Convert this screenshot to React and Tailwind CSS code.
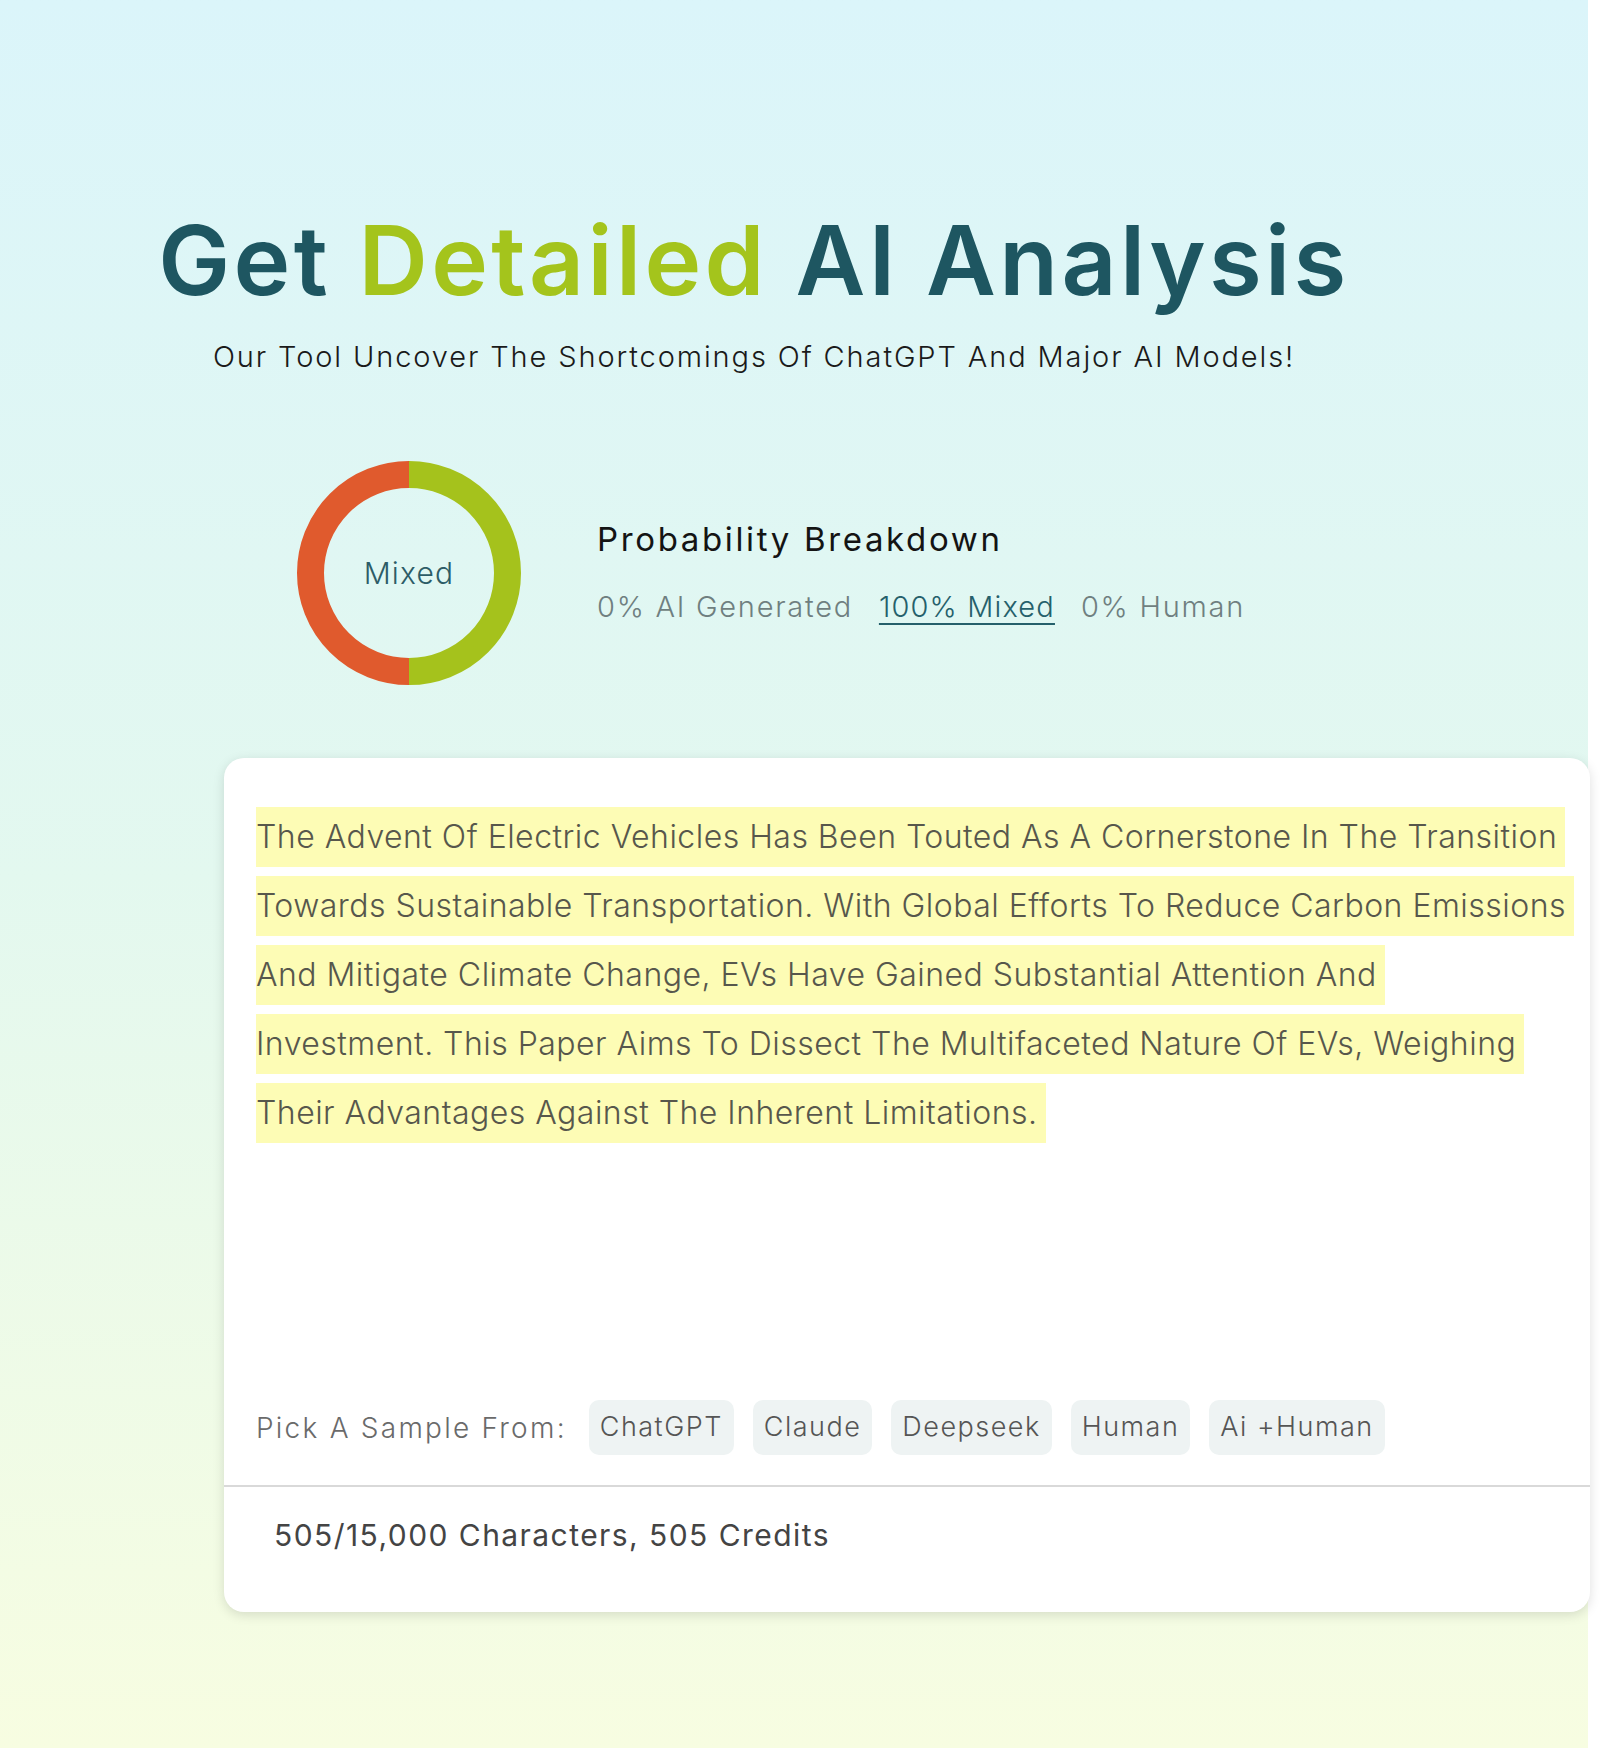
import React from "react";

const LINES = [
  "The Advent Of Electric Vehicles Has Been Touted As A Cornerstone In The Transition",
  "Towards Sustainable Transportation. With Global Efforts To Reduce Carbon Emissions",
  "And Mitigate Climate Change, EVs Have Gained Substantial Attention And",
  "Investment. This Paper Aims To Dissect The Multifaceted Nature Of EVs, Weighing",
  "Their Advantages Against The Inherent Limitations.",
];

const SAMPLES = ["ChatGPT", "Claude", "Deepseek", "Human", "Ai +Human"];

function Donut() {
  const size = 224;
  const sw = 27;
  const r = (size - sw) / 2;
  const c = size / 2;
  return (
    <svg width={size} height={size} viewBox={`0 0 ${size} ${size}`} className="shrink-0">
      <path
        d={`M ${c} ${c - r} A ${r} ${r} 0 0 0 ${c} ${c + r}`}
        fill="none"
        stroke="#e05a2d"
        strokeWidth={sw}
      />
      <path
        d={`M ${c} ${c - r} A ${r} ${r} 0 0 1 ${c} ${c + r}`}
        fill="none"
        stroke="#a5c21c"
        strokeWidth={sw}
      />
    </svg>
  );
}

export default function App() {
  return (
    <div className="flex w-full bg-white" style={{ fontFamily: "Inter, 'Noto Sans', sans-serif" }}>
      <div className="w-[1588px] h-[1748px] shrink-0 bg-gradient-to-b from-[#dbf5fa] via-[#e3f8ef] to-[#f7fde1]">
        {/* heading */}
        <div className="w-[1508px] pt-[200px] text-center">
          <h1 className="text-[96px] leading-[120px] font-semibold tracking-[0.035em] text-[#1e5661]">
            Get <span className="text-[#a4c41c]">Detailed</span> AI Analysis
          </h1>
          <p className="mt-[17px] text-[29px] leading-[40px] font-light tracking-[0.065em] text-[#1a1a1a]">
            Our Tool Uncover The Shortcomings Of ChatGPT And Major AI Models!
          </p>
        </div>

        {/* probability summary */}
        <div className="flex items-center mt-[84px] pl-[297px]">
          <div className="relative">
            <Donut />
            <div className="absolute inset-0 flex items-center justify-center text-[30px] font-light tracking-[0.04em] text-[#2c5c67]">
              Mixed
            </div>
          </div>
          <div className="ml-[76px] flex flex-col">
            <div className="text-[33px] leading-[40px] tracking-[0.08em] text-[#141414]">Probability Breakdown</div>
            <div className="mt-[28px] flex items-center gap-[26px] text-[29px] leading-[40px] font-light tracking-[0.06em] text-[#6f7f80]">
              <span>0% AI Generated</span>
              <span className="text-[#25606b] tracking-[0.04em] underline underline-offset-[6px] decoration-[2px]">100% Mixed</span>
              <span>0% Human</span>
            </div>
          </div>
        </div>

        {/* text card */}
        <div className="ml-[224px] mt-[73px] w-[1366px] h-[854px] flex flex-col rounded-[20px] bg-white shadow-[0_3px_12px_rgba(0,0,0,0.13)]">
          <div className="h-[727px] flex flex-col justify-between pt-[49px] pl-[32px] pb-[30px]">
            <div className="flex flex-col gap-[9px] items-start">
              {LINES.map((line) => (
                <div
                  key={line}
                  className="h-[60px] flex items-center pr-[8px] bg-[#fdfcb5] text-[32px] font-light tracking-[0.015em] text-[#57574c] whitespace-nowrap"
                >
                  {line}
                </div>
              ))}
            </div>
            <div className="flex items-center">
              <span className="mr-[22px] text-[28px] font-light tracking-[0.08em] text-[#6a6a6a]">Pick A Sample From:</span>
              <div className="flex gap-[19px]">
                {SAMPLES.map((s) => (
                  <button
                    key={s}
                    className="h-[55px] px-[11px] rounded-[10px] bg-[#eef3f3] text-[27px] font-light tracking-[0.055em] text-[#555]"
                  >
                    {s}
                  </button>
                ))}
              </div>
            </div>
          </div>
          <div className="border-t-2 border-[#d9d9d9] flex-1 pl-[50px] pt-[28px]">
            <span className="text-[30px] leading-[40px] tracking-[0.048em] text-[#444]">505/15,000 Characters, 505 Credits</span>
          </div>
        </div>
      </div>
    </div>
  );
}
